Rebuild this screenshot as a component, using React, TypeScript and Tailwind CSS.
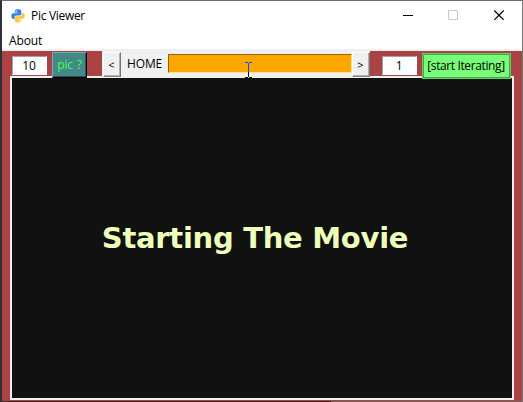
function PythonLogo() {
  return (
    <svg width="14" height="14" viewBox="0 0 14 14" aria-hidden="true">
      <path
        d="M6.8.3C4.4.3 3.8 1.2 3.8 2.2v1.5h3.4v.6H2.4C1 4.3.3 5.5.3 7s.7 2.9 2 2.9h1.3V8.3c0-1.1.9-1.9 2-1.9h3c1 0 1.700-.8 1.700-1.700V2.200C10.300.9 9 .3 6.800.3z"
        fill="#3b7fe8"
      />
      <path
        d="M7.200 13.700c2.400 0 3-.9 3-1.900v-1.500H6.800v-.6h4.800c1.400 0 2.100-1.200 2.100-2.700s-.7-2.900-2-2.900h-1v1.300c0 1.100-.9 1.900-2 1.900h-3c-1 0-1.900.9-1.900 1.900v2.600c0 1.300 1.300 1.900 3.500 1.900z"
        fill="#fdc63b"
      />
      <circle cx="5.200" cy="2.200" r=".7" fill="#fff" />
      <circle cx="8.800" cy="11.800" r=".7" fill="#fff" />
    </svg>
  );
}

function TitleBar() {
  return (
    <header className="flex h-[30px] items-center bg-white pl-[9px]">
      <PythonLogo />
      <h1 className="ml-[6px] text-[12px] leading-4 tracking-[-0.3px]">Pic Viewer</h1>
      <svg className="ml-auto mr-[13px]" width="108" height="12" viewBox="0 0 108 12" aria-hidden="true" fill="none">
        <path d="M2 5.500h10" stroke="#000" />
        <path d="M47.500 .5h9v9h-9z" stroke="#c9c9c9" />
        <path d="M93.300 .5l9.400 9.400M102.700 .5l-9.400 9.400" stroke="#000" strokeWidth="1.200" />
      </svg>
    </header>
  );
}

function NumberEntry({ value }: { value: string }) {
  return (
    <div className="mt-[5px] flex h-[19px] w-[35px] items-center justify-center border border-t-[#a0a0a0] border-l-[#a0a0a0] border-r-white border-b-white bg-white pr-px tracking-[-0.2px]">
      {value}
    </div>
  );
}

function StepButton({ label }: { label: string }) {
  return (
    <button className="mt-px flex h-[25px] w-[18px] shrink-0 items-center justify-center border border-t-white border-l-white border-r-[#777] border-b-[#888] bg-[#f0f0f0] pr-px text-[11px] shadow-[inset_-1px_-1px_0_#b0b0b0]">
      {label}
    </button>
  );
}

export default function App() {
  return (
    <div className="flex h-[402px] w-[523px] flex-col overflow-hidden border-t border-r border-l-2 border-t-[#6b6b6b] border-r-[#777] border-l-[#302f3b] bg-[#aa4343] font-['Open_Sans','Noto_Sans',sans-serif] text-[12px] leading-4 text-black">
      <TitleBar />
      <nav className="flex h-[20px] shrink-0 items-center border-b-2 border-[#f0f0f0] bg-white pt-[2px] pl-[7px]">
        <span className="tracking-[-0.12px]">About</span>
      </nav>
      <div className="relative z-10 flex h-[25px] shrink-0 pl-[10px]">
        <NumberEntry value="10" />
        <button className="ml-[5px] mt-px flex h-[26px] w-[35px] shrink-0 items-center justify-center border-t border-l border-r border-b border-t-[#78aaa9] border-l-[#78aaa9] border-r-black border-b-black bg-[#448888] text-[12px] tracking-[-0.2px] word-spacing-[1px] text-[#44ff55] shadow-[inset_-1px_-1px_0_#285555] [word-spacing:1px]">
          pic ?
        </button>
        <div className="ml-[15px] flex h-[27px] w-[268px] shrink-0 bg-[#f0f0f0] pl-px">
          <StepButton label="<" />
          <span className="mt-[5px] ml-[6px] w-[41px] tracking-[-0.15px]">HOME</span>
          <div className="relative mt-[3px] h-[19px] w-[184px] shrink-0 border border-t-[#996300] border-l-[#996300] border-r-[#ffe680] border-b-[#ffe680] bg-[#ffa500]">
            <svg className="absolute top-[7px] left-[75px]" width="9" height="17" viewBox="0 0 9 17" fill="none" aria-hidden="true">
              <path d="M1 .5h3M5 .5h3M4.500 1v9" stroke="#0055f0" />
              <path d="M4.500 10v5M1 15.500h3M5 15.500h3" stroke="#111" />
            </svg>
          </div>
          <StepButton label=">" />
        </div>
        <div className="ml-[12px]">
          <NumberEntry value="1" />
        </div>
        <button className="ml-[5px] mt-[2px] flex h-[26px] w-[89px] shrink-0 items-center justify-center border border-[#65c965] bg-[#77ff77] pr-px text-[12px] tracking-[-0.38px] whitespace-nowrap shadow-[inset_0_0_0_1px_#48a448]">
          [start Iterating]
        </button>
      </div>
      <main className="ml-[8px] flex h-[324px] w-[504px] shrink-0 items-center justify-center border-2 border-[#f0f0f0] bg-[#111111] pr-[14px]">
        <p className="whitespace-nowrap font-['DejaVu_Sans',sans-serif] text-[29px] font-bold leading-9 tracking-[-0.28px] text-[#eeffbb]">
          Starting The Movie
        </p>
      </main>
      <footer className="mt-px flex h-px shrink-0">
        <div className="w-[329px] bg-[#3a2925]" />
        <div className="flex-1 bg-[#6a6560]" />
      </footer>
    </div>
  );
}
